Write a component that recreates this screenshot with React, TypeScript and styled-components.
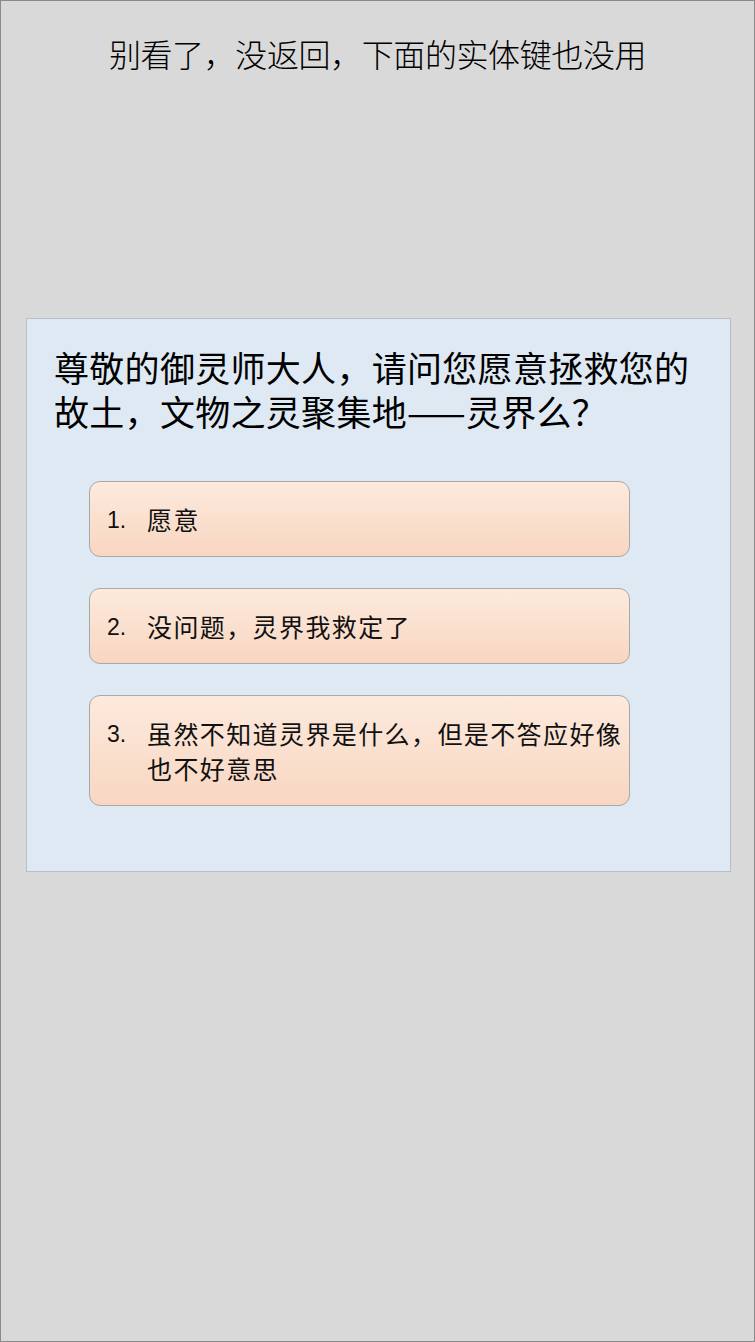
import React from "react";
import styled, { createGlobalStyle } from "styled-components";

const Global = createGlobalStyle`
  html, body { margin: 0; padding: 0; background: #d9d9d9; }
  * { box-sizing: border-box; }
`;

const Screen = styled.div`
  width: 755px;
  height: 1342px;
  background: #d9d9d9;
  border: 1px solid #8a8a8a;
  display: flex;
  flex-direction: column;
  align-items: stretch;
  font-family: "Noto Sans CJK SC", "Noto Sans", sans-serif;
  color: #111;
`;

const Notice = styled.div`
  padding-top: 30px;
  text-align: center;
  font-size: 32px;
  line-height: 45px;
  font-weight: 300;
  color: #000;
  letter-spacing: -0.4px;
`;

const Card = styled.section`
  margin: 242px 0 0 25px;
  width: 705px;
  height: 554px;
  background: #dfe9f3;
  border: 1px solid #b9bfc6;
  padding: 26px 20px 0 27px;
  display: flex;
  flex-direction: column;
`;

const Question = styled.h1`
  margin: 0;
  font-size: 35px;
  line-height: 44px;
  font-weight: 400;
  color: #000;
  letter-spacing: 0.3px;
`;

const Options = styled.ol`
  list-style: none;
  margin: 48px 0 0 35px;
  padding: 0;
  display: flex;
  flex-direction: column;
  gap: 31px;
`;

const Option = styled.li`
  width: 541px;
  border: 1px solid #a8a8a8;
  border-radius: 11px;
  background: linear-gradient(to bottom, #fdeadd, #f8d6c1);
  padding: 20px 4px 19px 17px;
  display: flex;
  align-items: flex-start;
  font-size: 25px;
  line-height: 35px;
  color: #111;
`;

const Num = styled.span`
  flex: 0 0 40px;
  height: 35px;
  padding-top: 1px;
  font-family: "Liberation Sans", "Noto Sans", sans-serif;
  font-size: 23px;
  line-height: 35px;
`;

const Label = styled.span`
  flex: 1;
  letter-spacing: 1.4px;
`;

const options = ["愿意", "没问题，灵界我救定了", "虽然不知道灵界是什么，但是不答应好像也不好意思"];

export default function App() {
  return (
    <>
      <Global />
      <Screen>
        <Notice>别看了，没返回，下面的实体键也没用</Notice>
        <Card>
          <Question>
            尊敬的御灵师大人，请问您愿意拯救您的
            <br />
            故土，文物之灵聚集地——灵界么？
          </Question>
          <Options>
            {options.map((o, i) => (
              <Option key={i}>
                <Num>{i + 1}.</Num>
                <Label>{o}</Label>
              </Option>
            ))}
          </Options>
        </Card>
      </Screen>
    </>
  );
}
